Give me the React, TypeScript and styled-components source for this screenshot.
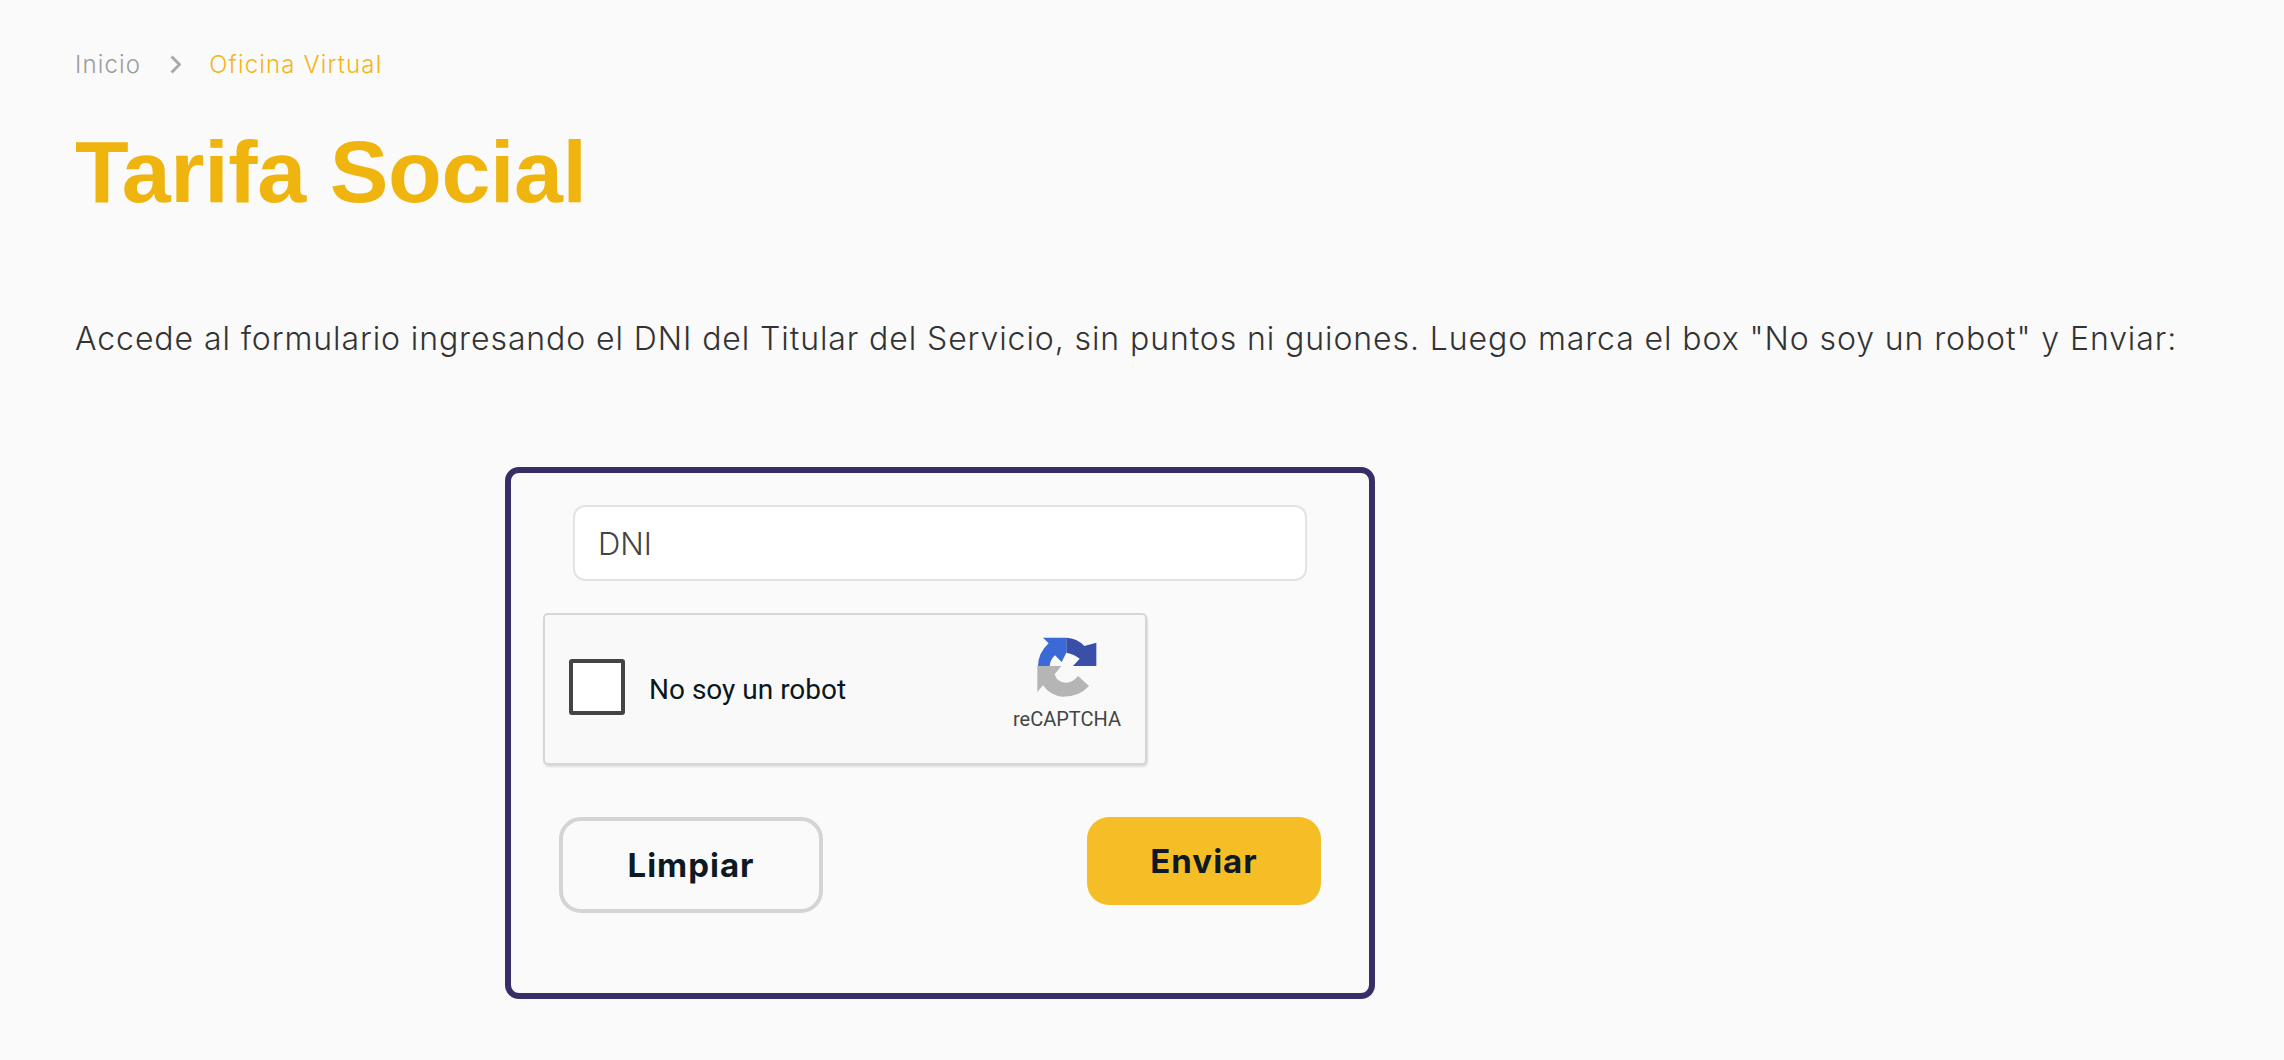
import styled, { createGlobalStyle } from "styled-components";

const GlobalStyle = createGlobalStyle`
  html, body {
    margin: 0;
    padding: 0;
    background: #fafafa;
  }
`;

const Page = styled.main`
  box-sizing: border-box;
  height: 1060px;
  padding: 50px 0 0 75px;
  overflow: hidden;
  font-family: "Inter", "Liberation Sans", sans-serif;
`;

const Breadcrumb = styled.nav`
  display: flex;
  align-items: center;
  height: 28px;
  font-size: 24px;
  font-weight: 300;
`;

const Crumb = styled.span<{ $active?: boolean }>`
  color: ${(p) => (p.$active ? "#f3b614" : "#9c9c9c")};
  letter-spacing: 1.15px;
`;

const Chevron = styled.svg`
  width: 11px;
  height: 19px;
  margin: 0 28px 0 29px;
  fill: none;
  stroke: #a9a9a9;
  stroke-width: 3;
`;

const Title = styled.h1`
  margin: 44px 0 0;
  font-family: "Liberation Sans", Arial, sans-serif;
  font-size: 88px;
  line-height: 100px;
  font-weight: 700;
  letter-spacing: -0.4px;
  color: #f0b40e;
`;

const Intro = styled.p`
  margin: 97px 0 0;
  font-size: 32px;
  line-height: 40px;
  font-weight: 300;
  letter-spacing: 0.91px;
  color: #333;
  white-space: nowrap;
`;

const Card = styled.form`
  box-sizing: border-box;
  width: 870px;
  height: 532px;
  margin: 108px 0 0 430px;
  padding: 32px 48px 0 32px;
  border: 6px solid #352f66;
  border-radius: 14px;
`;

const DniInput = styled.input`
  display: block;
  box-sizing: border-box;
  width: 734px;
  height: 76px;
  margin-left: 30px;
  padding: 0 23px;
  border: 2px solid #e3e3e3;
  border-radius: 12px;
  background: #fff;
  font-family: "Inter", "Liberation Sans", sans-serif;
  font-size: 31px;
  font-weight: 300;
  outline: none;

  &::placeholder {
    color: #444;
    opacity: 1;
  }
`;

const Captcha = styled.div`
  box-sizing: border-box;
  display: flex;
  align-items: center;
  justify-content: space-between;
  width: 604px;
  height: 152px;
  margin-top: 32px;
  padding: 0 24px 5px 24px;
  border: 2px solid #d6d6d6;
  border-radius: 5px;
  background: #f9f9f9;
  box-shadow: 1px 2px 2px rgba(0, 0, 0, 0.12);
  font-family: "Roboto", sans-serif;
`;

const CaptchaLeft = styled.label`
  display: flex;
  align-items: center;
  gap: 24px;
  font-size: 28px;
  color: #0b1620;
`;

const CaptchaLabel = styled.span`
  margin-top: 5px;
`;

const CheckBox = styled.span`
  box-sizing: border-box;
  width: 56px;
  height: 56px;
  border: 4px solid #444;
  border-radius: 3px;
  background: #fff;
`;

const CaptchaBrand = styled.div`
  display: flex;
  flex-direction: column;
  align-items: center;
  gap: 10px;
  margin-bottom: 6px;
  font-size: 20px;
  color: #444;
`;

const Logo = styled.svg`
  display: block;
  width: 60px;
  height: 60px;
`;

const ButtonRow = styled.div`
  display: flex;
  justify-content: space-between;
  align-items: flex-start;
  margin-top: 52px;
  padding-left: 16px;
`;

const Button = styled.button<{ $primary?: boolean }>`
  box-sizing: border-box;
  width: ${(p) => (p.$primary ? "234px" : "264px")};
  height: ${(p) => (p.$primary ? "88px" : "96px")};
  border: ${(p) => (p.$primary ? "none" : "4px solid #d4d4d2")};
  border-radius: 22px;
  background: ${(p) => (p.$primary ? "#f6be26" : "transparent")};
  color: #0d1a26;
  font-family: "Inter", "Liberation Sans", sans-serif;
  font-size: 33px;
  font-weight: 700;
  letter-spacing: 1px;
  cursor: pointer;
`;

const App = () => {
  return (
    <Page>
      <GlobalStyle />
      <Breadcrumb>
        <Crumb>Inicio</Crumb>
        <Chevron viewBox="0 0 11 19">
          <path d="M1.5 1.5 L9.5 9.5 L1.5 17.5" />
        </Chevron>
        <Crumb $active>Oficina Virtual</Crumb>
      </Breadcrumb>
      <Title>Tarifa Social</Title>
      <Intro>
        Accede al formulario ingresando el DNI del Titular del Servicio, sin puntos ni guiones.
        Luego marca el box "No soy un robot" y Enviar:
      </Intro>
      <Card>
        <DniInput placeholder="DNI" />
        <Captcha>
          <CaptchaLeft>
            <CheckBox />
            <CaptchaLabel>No soy un robot</CaptchaLabel>
          </CaptchaLeft>
          <CaptchaBrand>
            <Logo viewBox="112 53 180 180">
              <path
                fill="#3b69d6"
                d="M130 55 H200 V100 L186 128 L166 108 Q152 120 150 140 H115 Q116 100 147 72 Z"
              />
              <path
                fill="#3a4fa8"
                d="M200 55 Q232 56 254 80 L290 70 V140 H220 L240 118 Q224 104 200 100 Z"
              />
              <path
                fill="#b5b5b5"
                d="M113 140 H185 L165 165 Q172 190 198 190 Q220 190 235 170 L268 200 Q240 232 190 232 Q152 230 130 198 L113 218 Z"
              />
            </Logo>
            reCAPTCHA
          </CaptchaBrand>
        </Captcha>
        <ButtonRow>
          <Button type="button">Limpiar</Button>
          <Button type="button" $primary>
            Enviar
          </Button>
        </ButtonRow>
      </Card>
    </Page>
  );
};

export default App;
